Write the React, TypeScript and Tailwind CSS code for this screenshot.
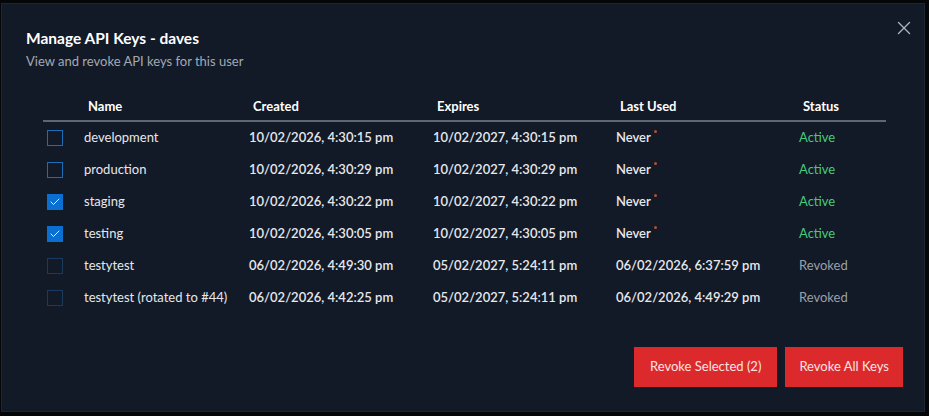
import { X, Check } from "lucide-react";

interface ApiKey {
  name: string;
  created: string;
  expires: string;
  lastUsed: string;
  active: boolean;
  checked: boolean;
}

const keys: ApiKey[] = [
  { name: "development", created: "10/02/2026, 4:30:15 pm", expires: "10/02/2027, 4:30:15 pm", lastUsed: "Never", active: true, checked: false },
  { name: "production", created: "10/02/2026, 4:30:29 pm", expires: "10/02/2027, 4:30:29 pm", lastUsed: "Never", active: true, checked: false },
  { name: "staging", created: "10/02/2026, 4:30:22 pm", expires: "10/02/2027, 4:30:22 pm", lastUsed: "Never", active: true, checked: true },
  { name: "testing", created: "10/02/2026, 4:30:05 pm", expires: "10/02/2027, 4:30:05 pm", lastUsed: "Never", active: true, checked: true },
  { name: "testytest", created: "06/02/2026, 4:49:30 pm", expires: "05/02/2027, 5:24:11 pm", lastUsed: "06/02/2026, 6:37:59 pm", active: false, checked: false },
  { name: "testytest (rotated to #44)", created: "06/02/2026, 4:42:25 pm", expires: "05/02/2027, 5:24:11 pm", lastUsed: "06/02/2026, 4:49:29 pm", active: false, checked: false },
];

const cols = "grid grid-cols-[41px_165px_184px_183px_183px_1fr]";

const Checkbox = ({ checked, disabled }: { checked: boolean; disabled: boolean }) => {
  if (checked) {
    return (
      <div className="w-4 h-4 bg-[#0b6fd1] flex items-center justify-center">
        <Check size={12} strokeWidth={1.75} className="text-white" />
      </div>
    );
  }
  return (
    <div
      className={`w-4 h-4 border-[1.5px] ${disabled ? "border-[#1b3a60]" : "border-[#1d6cb8]"}`}
    />
  );
};

const App = () => {
  return (
    <div
      className="w-[929px] h-[416px] bg-[#050608] pt-[3px] pl-[1px] overflow-hidden"
      style={{ fontFamily: 'Lato, "Noto Sans", sans-serif' }}
    >
      <div className="relative w-[924px] h-[409px] bg-[#121927] border border-[#1e2633] pt-[22px] px-[24px]">
        {/* Close */}
        <button className="absolute top-[13px] right-[9px] text-[#aab1bd]">
          <X size={22} strokeWidth={1.5} />
        </button>

        {/* Header */}
        <h2 className="text-[15.5px] leading-[24px] font-bold text-white">Manage API Keys - daves</h2>
        <p className="mt-[1px] text-[13px] leading-[20px] text-[#a3a9b4]">View and revoke API keys for this user</p>

        {/* Table */}
        <div className="mt-[21px] ml-[17px] w-[843px]">
          <div className={`${cols} h-[30px] pt-[2px] items-center border-b-2 border-[#5f6673] text-[13px] font-bold text-white`}>
            <div />
            <div className="pl-[4px]">Name</div>
            <div className="pl-[4px]">Created</div>
            <div className="pl-[4px]">Expires</div>
            <div className="pl-[4px]">Last Used</div>
            <div className="pl-[4px]">Status</div>
          </div>
          {keys.map((k) => (
            <div key={k.name} className={`${cols} h-[32px] items-center text-[13px] text-[#e6e8ec]`}>
              <div className="pl-[4px]">
                <Checkbox checked={k.checked} disabled={!k.active} />
              </div>
              <div>{k.name}</div>
              <div className="font-semibold">{k.created}</div>
              <div className="font-semibold">{k.expires}</div>
              <div className="font-semibold flex items-start">
                <span>{k.lastUsed}</span>
                {k.lastUsed === "Never" && (
                  <span className="ml-[3px] mt-[2px] w-[3px] h-[3px] rounded-full bg-[#b8501e]" />
                )}
              </div>
              <div className={k.active ? "text-[#43cd78]" : "text-[#9aa0aa]"}>
                {k.active ? "Active" : "Revoked"}
              </div>
            </div>
          ))}
        </div>

        {/* Actions */}
        <div className="mt-[33px] mr-[-3px] flex justify-end gap-2">
          <button className="h-[40px] px-[16px] bg-[#dc2a2c] text-[13px] text-[#fbe3e3]">Revoke Selected (2)</button>
          <button className="h-[40px] px-[14px] bg-[#dc2a2c] text-[13px] text-[#fbe3e3]">Revoke All Keys</button>
        </div>
      </div>
    </div>
  );
};

export default App;
